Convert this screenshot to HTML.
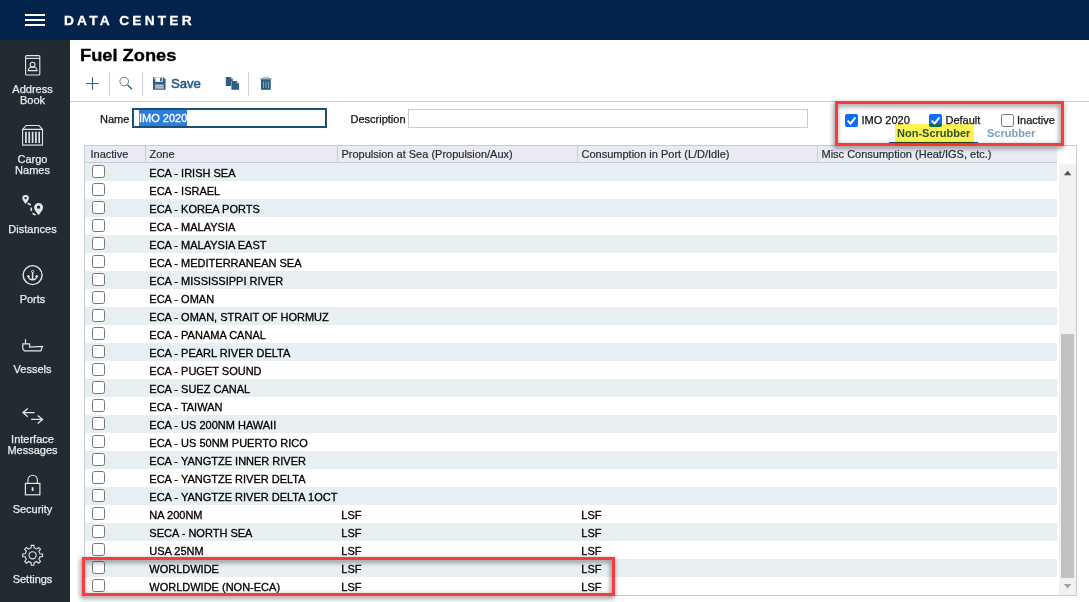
<!DOCTYPE html>
<html><head><meta charset="utf-8"><title>Fuel Zones</title>
<style>
html,body{margin:0;padding:0;}
body{width:1089px;height:602px;overflow:hidden;position:relative;background:#fff;font-family:"Liberation Sans",Arial,sans-serif;font-size:11px;color:#222;}
.abs{position:absolute;}
#hdr{left:0;top:0;width:1089px;height:40px;background:#03234b;}
#hdr .t{left:64px;top:12.5px;-webkit-text-stroke:0.3px #fff;color:#fff;font-weight:bold;font-size:13.7px;letter-spacing:3.2px;line-height:16px;white-space:nowrap;}
#hdr .ham{left:25px;width:20px;height:2px;background:#fff;}
#side{left:0;top:40px;width:70px;height:562px;background:#222b31;}
#side .lb{left:0;width:65px;text-align:center;color:#e8edf0;font-size:11px;line-height:10.5px;-webkit-text-stroke:0.25px #e8edf0;white-space:nowrap;}
#side svg{position:absolute;}
h1{position:absolute;left:80px;top:46px;margin:0;font-size:16.600px;line-height:20px;font-weight:bold;color:#000;white-space:nowrap;transform:scaleX(1.1);transform-origin:0 0;-webkit-text-stroke:0.35px #000;}
.sep{position:absolute;width:1px;background:#ccd3de;top:72px;height:23.5px;}
#tline{left:70px;top:101px;width:1019px;height:1px;background:#c9d0d6;}
.lbl{position:absolute;font-size:11px;line-height:14px;color:#111;-webkit-text-stroke:0.25px currentColor;white-space:nowrap;}
#name{left:132px;top:108px;width:191px;height:15.5px;border:2px solid #1e5171;background:#fff;}
#name span{position:absolute;left:5px;top:0;height:15.5px;line-height:16.8px;padding:0;background:#2a7de1;color:#fff;font-size:11px;white-space:nowrap;-webkit-text-stroke:0.3px #fff;}
#desc{left:408px;top:109px;width:397.5px;height:16.5px;border:1px solid #c8ced3;background:#fff;}
#grid{left:84px;top:145px;width:991px;height:449px;border:1px solid #c3cdd8;background:#fff;overflow:hidden;}
#gh{left:0;top:0;width:972px;height:16px;background:#e9eaf2;border-bottom:1px solid #c6cdd8;}
#gh span{position:absolute;top:0;height:16px;line-height:16px;font-size:11px;color:#262a36;-webkit-text-stroke:0.18px #262a36;white-space:nowrap;border-left:1px solid #c6cdd8;padding-left:3.5px;box-sizing:border-box;}
.r{position:absolute;left:0;width:972px;height:18px;}
.r.alt{background:#e8eff3;}
.r span{position:absolute;top:0;line-height:20px;height:18px;font-size:11px;color:#000;-webkit-text-stroke:0.3px #000;white-space:nowrap;}
.r .cb{left:7px;top:2px;width:11px;height:11px;border:1px solid #767676;border-radius:2.5px;background:#fff;}
.r .z{left:64.3px;}
.r .p{left:256.3px;}
.r .c{left:496.3px;}
#sb{left:974px;top:18px;width:17px;height:431px;background:#f1f1f1;}
#thumb{left:976px;top:188px;width:13px;height:244px;background:#c1c1c1;}
.red{position:absolute;border:3px solid #f93a3f;filter:drop-shadow(-0.5px 2.5px 2.5px rgba(0,0,0,.58));box-sizing:border-box;}
.ck{position:absolute;width:13px;height:13px;box-sizing:border-box;border-radius:2px;}
.ck.on{background:#0d6efd;}
.ck svg{display:block;}
.ck.off{border:1px solid #767676;background:#fff;border-radius:2.5px;}
</style></head><body>
<div id="hdr" class="abs">
 <div class="ham abs" style="top:14px"></div><div class="ham abs" style="top:19px"></div><div class="ham abs" style="top:24px"></div>
 <div class="t abs">DATA CENTER</div>
</div>
<div id="side" class="abs">
 <div class="lb abs" style="top:44px">Address<br>Book</div>
 <div class="lb abs" style="top:114px">Cargo<br>Names</div>
 <div class="lb abs" style="top:184px">Distances</div>
 <div class="lb abs" style="top:254px">Ports</div>
 <div class="lb abs" style="top:324px">Vessels</div>
 <div class="lb abs" style="top:394px">Interface<br>Messages</div>
 <div class="lb abs" style="top:464px">Security</div>
 <div class="lb abs" style="top:534px">Settings</div>
</div>
<svg class="abs" style="left:0;top:0" width="70" height="602" viewBox="0 0 70 602" fill="none" stroke="#e3e6e8" stroke-width="1.1" stroke-linecap="butt" stroke-linejoin="miter">
<!-- address book -->
<rect x="25.6" y="55.6" width="14.2" height="19.4" rx="1"/>
<path d="M25.6 58.4H39.8"/>
<circle cx="32.6" cy="64.700" r="2.400"/>
<path d="M28.200 70.600a4.400 3.700 0 0 1 8.800 0z"/>
<!-- cargo -->
<path d="M22.6 129.4L26.2 125.5H39L42.5 129.4M22.6 129.4H42.5V145.2H22.6Z"/>
<path d="M22.6 145H42.5" stroke="#9aa0a4" stroke-width="1.4"/>
<path d="M25.9 131.8V143M29.2 131.8V143M32.6 131.8V143M35.9 131.8V143M39.2 131.8V143" stroke-width="1.7"/>
<!-- distances -->
<path d="M25.6 194.9a3.3 3.3 0 0 1 3.3 3.3c0 2-2.2 4.3-3.3 5.8c-1.100-1.500-3.300-3.800-3.300-5.800a3.300 3.300 0 0 1 3.300-3.300zM25.600 196.900a1.200 1.200 0 1 0 0 2.400a1.200 1.200 0 0 0 0-2.400z" fill="#e3e6e8" stroke="none" fill-rule="evenodd"/>
<path d="M38.600 202.900a4.500 4.500 0 0 1 4.500 4.500c0 2.700-3 5.700-4.500 7.700c-1.500-2-4.500-5-4.500-7.700a4.500 4.500 0 0 1 4.500-4.500zM38.600 205.600a1.600 1.600 0 1 0 0 3.200a1.600 1.600 0 0 0 0-3.200z" fill="#e3e6e8" stroke="none" fill-rule="evenodd"/>
<path d="M27.6 203.300L30.800 205M31.300 207.400V210.900M32.400 213.400L35.600 215" stroke-width="1.6"/>
<!-- ports -->
<circle cx="32.6" cy="275.100" r="9.500" stroke-width="1.400"/>
<circle cx="32.600" cy="271.500" r="1.100" stroke-width="1"/>
<path d="M32.600 272.600V279.800M28.300 275.800a4.300 4 0 0 0 8.600 0" stroke-width="1.500"/>
<path d="M27.300 277.200L28.300 275.200L29.800 276.800M37.900 277.200L36.900 275.200L35.400 276.800" stroke-width="1"/>
<!-- vessel -->
<path d="M25.500 339.300V343.800M22.800 343.800H29.600V347.200L42.500 346.500L40.800 350.900H24.400L22.800 348.800Z" stroke-width="1.200"/>
<!-- arrows -->
<path d="M34.600 412.600H23M27.800 408.500L23 412.600L27.800 416.700M31.100 419.400H42.600M37.700 415.400L42.600 419.400L37.700 423.400" stroke-width="1.300"/>
<!-- lock -->
<rect x="25.400" y="483.400" width="14.500" height="11.400" stroke-width="1.200"/>
<path d="M27.900 483.400V480a4.750 4.750 0 0 1 9.500 0V483.400" stroke-width="1.100"/>
<path d="M32.600 487.200V491" stroke-width="1.800"/>
<!-- gear -->
<path d="M31.06 548.06L31.29 545.39L33.91 545.39L34.14 548.06A7.4 7.4 0 0 1 36.63 549.09L38.69 547.37L40.53 549.21L38.81 551.27A7.4 7.4 0 0 1 39.84 553.76L42.51 553.99L42.51 556.61L39.84 556.84A7.4 7.4 0 0 1 38.81 559.33L40.53 561.39L38.69 563.23L36.63 561.51A7.4 7.4 0 0 1 34.14 562.54L33.91 565.21L31.29 565.21L31.06 562.54A7.4 7.4 0 0 1 28.57 561.51L26.51 563.23L24.67 561.39L26.39 559.33A7.4 7.4 0 0 1 25.36 556.84L22.69 556.61L22.69 553.99L25.36 553.76A7.4 7.4 0 0 1 26.39 551.27L24.67 549.21L26.51 547.37L28.57 549.09A7.4 7.4 0 0 1 31.06 548.06Z" stroke-width="1.100"/>
<circle cx="32.600" cy="555.300" r="3.600" stroke-width="1.100"/>
</svg>
<h1>Fuel Zones</h1>
<svg class="abs" style="left:70px;top:65px" width="230" height="35" viewBox="70 65 230 35" fill="none" stroke="#2d6080" stroke-width="1">
<!-- plus -->
<path d="M92.500 77.200V89.800M86.200 83.500H98.800" stroke-width="1.100"/>
<!-- search -->
<circle cx="124.200" cy="81.500" r="4.300" stroke-width="0.900" stroke="#3a6a8c"/>
<path d="M127.500 84.800L132 89.300" stroke-width="1.500"/>
<!-- save -->
<path d="M153 77.500H163.600L165.600 79.500V89.800H153Z" fill="#2d6080" stroke="none"/>
<rect x="155.400" y="77.500" width="7.300" height="4.400" fill="#fff" stroke="none"/>
<rect x="160" y="78" width="1.800" height="3.300" fill="#2d6080" stroke="none"/>
<rect x="154" y="78.300" width="1" height="1" fill="#dfe7ee" stroke="none"/>
<rect x="155" y="84.300" width="8.700" height="4.900" fill="#8da4b7" stroke="none"/>
<path d="M155 85.600H163.700M155 87.300H163.700" stroke="#c9d4de" stroke-width="0.700"/>
<!-- copy -->
<path d="M225.800 77H230.800L232.800 79V81H231V86H225.800Z" fill="#2d6080" stroke="none"/>
<path d="M230.800 77V79H232.800Z" fill="#b7c7d4" stroke="none"/>
<path d="M231.400 81H236.600L239.100 83.500V89.800H231.400Z" fill="#2d6080" stroke="none"/>
<path d="M236.600 81V83.500H239.100Z" fill="#9fb6c8" stroke="none"/>
<!-- trash -->
<path d="M259.600 78.700H272" stroke="#7f9bb0" stroke-width="0.900"/>
<path d="M263.600 78.500V77.300H268.600V78.500" stroke="#8fa8ba" stroke-width="0.900" fill="none"/>
<path d="M261 79.200H270.800V89.800H261Z" fill="#2d6080" stroke="none"/>
<path d="M263.500 81.600V88M266 81.600V88M268.500 81.600V88" stroke="#9db5c6" stroke-width="0.800"/>
</svg>
<div class="sep" style="left:109px"></div><div class="sep" style="left:142px"></div><div class="sep" style="left:248px"></div>
<div class="lbl" style="left:171px;top:76px;font-weight:normal;font-size:13.200px;line-height:16px;letter-spacing:-0.1px;color:#265a82;-webkit-text-stroke:0.55px #265a82">Save</div>
<div id="tline" class="abs"></div>
<div class="lbl" style="left:100px;top:112px">Name</div>
<div id="name" class="abs"><span>IMO 2020</span></div>
<div class="lbl" style="left:350.5px;top:112px">Description</div>
<div id="desc" class="abs"></div>

<div class="ck on" style="left:845px;top:114px"><svg width="13" height="13" viewBox="0 0 13 13"><path d="M2.6 6.6L5.6 9.6L10.4 3.300" fill="none" stroke="#fff" stroke-width="2"/></svg></div><div class="lbl" style="left:861.500px;top:113px">IMO 2020</div>
<div class="ck on" style="left:929px;top:114px"><svg width="13" height="13" viewBox="0 0 13 13"><path d="M2.6 6.6L5.6 9.6L10.4 3.300" fill="none" stroke="#fff" stroke-width="2"/></svg></div><div class="lbl" style="left:945.500px;top:113px">Default</div>
<div class="ck off" style="left:1001px;top:114px"></div><div class="lbl" style="left:1017px;top:113px">Inactive</div>
<div class="abs" style="left:889px;top:141.500px;width:89px;height:2px;background:#25477c"></div>
<div class="lbl" style="left:897px;top:126px;font-weight:bold;-webkit-text-stroke:0;color:#27578f">Non-Scrubber</div>
<div class="lbl" style="left:987px;top:126px;font-weight:bold;-webkit-text-stroke:0;color:#7aa0be">Scrubber</div>

<div id="grid" class="abs">
 <div id="gh" class="abs">
  <span style="left:0;width:60px;border-left:none;padding-left:5.5px">Inactive</span>
  <span style="left:60px;width:192px">Zone</span>
  <span style="left:252px;width:240px">Propulsion at Sea (Propulsion/Aux)</span>
  <span style="left:492px;width:240px">Consumption in Port (L/D/Idle)</span>
  <span style="left:732px;width:241px">Misc Consumption (Heat/IGS, etc.)</span>
 </div>
 <div id="rows" class="abs" style="left:0;top:17px;width:972px;height:432px">
<div class="r alt" style="top:0px"><span class="cb"></span><span class="z">ECA - IRISH SEA</span><span class="p"></span><span class="c"></span></div>
<div class="r" style="top:18px"><span class="cb"></span><span class="z">ECA - ISRAEL</span><span class="p"></span><span class="c"></span></div>
<div class="r alt" style="top:36px"><span class="cb"></span><span class="z">ECA - KOREA PORTS</span><span class="p"></span><span class="c"></span></div>
<div class="r" style="top:54px"><span class="cb"></span><span class="z">ECA - MALAYSIA</span><span class="p"></span><span class="c"></span></div>
<div class="r alt" style="top:72px"><span class="cb"></span><span class="z">ECA - MALAYSIA EAST</span><span class="p"></span><span class="c"></span></div>
<div class="r" style="top:90px"><span class="cb"></span><span class="z">ECA - MEDITERRANEAN SEA</span><span class="p"></span><span class="c"></span></div>
<div class="r alt" style="top:108px"><span class="cb"></span><span class="z">ECA - MISSISSIPPI RIVER</span><span class="p"></span><span class="c"></span></div>
<div class="r" style="top:126px"><span class="cb"></span><span class="z">ECA - OMAN</span><span class="p"></span><span class="c"></span></div>
<div class="r alt" style="top:144px"><span class="cb"></span><span class="z">ECA - OMAN, STRAIT OF HORMUZ</span><span class="p"></span><span class="c"></span></div>
<div class="r" style="top:162px"><span class="cb"></span><span class="z">ECA - PANAMA CANAL</span><span class="p"></span><span class="c"></span></div>
<div class="r alt" style="top:180px"><span class="cb"></span><span class="z">ECA - PEARL RIVER DELTA</span><span class="p"></span><span class="c"></span></div>
<div class="r" style="top:198px"><span class="cb"></span><span class="z">ECA - PUGET SOUND</span><span class="p"></span><span class="c"></span></div>
<div class="r alt" style="top:216px"><span class="cb"></span><span class="z">ECA - SUEZ CANAL</span><span class="p"></span><span class="c"></span></div>
<div class="r" style="top:234px"><span class="cb"></span><span class="z">ECA - TAIWAN</span><span class="p"></span><span class="c"></span></div>
<div class="r alt" style="top:252px"><span class="cb"></span><span class="z">ECA - US 200NM HAWAII</span><span class="p"></span><span class="c"></span></div>
<div class="r" style="top:270px"><span class="cb"></span><span class="z">ECA - US 50NM PUERTO RICO</span><span class="p"></span><span class="c"></span></div>
<div class="r alt" style="top:288px"><span class="cb"></span><span class="z">ECA - YANGTZE INNER RIVER</span><span class="p"></span><span class="c"></span></div>
<div class="r" style="top:306px"><span class="cb"></span><span class="z">ECA - YANGTZE RIVER DELTA</span><span class="p"></span><span class="c"></span></div>
<div class="r alt" style="top:324px"><span class="cb"></span><span class="z">ECA - YANGTZE RIVER DELTA 1OCT</span><span class="p"></span><span class="c"></span></div>
<div class="r" style="top:342px"><span class="cb"></span><span class="z">NA 200NM</span><span class="p">LSF</span><span class="c">LSF</span></div>
<div class="r alt" style="top:360px"><span class="cb"></span><span class="z">SECA - NORTH SEA</span><span class="p">LSF</span><span class="c">LSF</span></div>
<div class="r" style="top:378px"><span class="cb"></span><span class="z">USA 25NM</span><span class="p">LSF</span><span class="c">LSF</span></div>
<div class="r alt" style="top:396px"><span class="cb"></span><span class="z">WORLDWIDE</span><span class="p">LSF</span><span class="c">LSF</span></div>
<div class="r" style="top:414px"><span class="cb"></span><span class="z">WORLDWIDE (NON-ECA)</span><span class="p">LSF</span><span class="c">LSF</span></div>
 </div>
 <div id="sb" class="abs"></div>
 <div id="thumb" class="abs"></div>
 <svg class="abs" style="left:974px;top:17px" width="17" height="432" viewBox="0 0 17 432"><path d="M4.900 12.200L8.600 7.700L12.400 12.200Z" fill="#505050"/><path d="M4.900 420.900L8.600 425.400L12.400 420.900Z" fill="#a3a3a3"/></svg>
</div>
<div class="red" style="left:835px;top:101px;width:229px;height:45px"></div>
<div class="red" style="left:82px;top:557px;width:533px;height:39px"></div>
<div class="abs" style="left:895px;top:124px;width:79px;height:22px;background:#fff352;mix-blend-mode:multiply"></div>
</body></html>
